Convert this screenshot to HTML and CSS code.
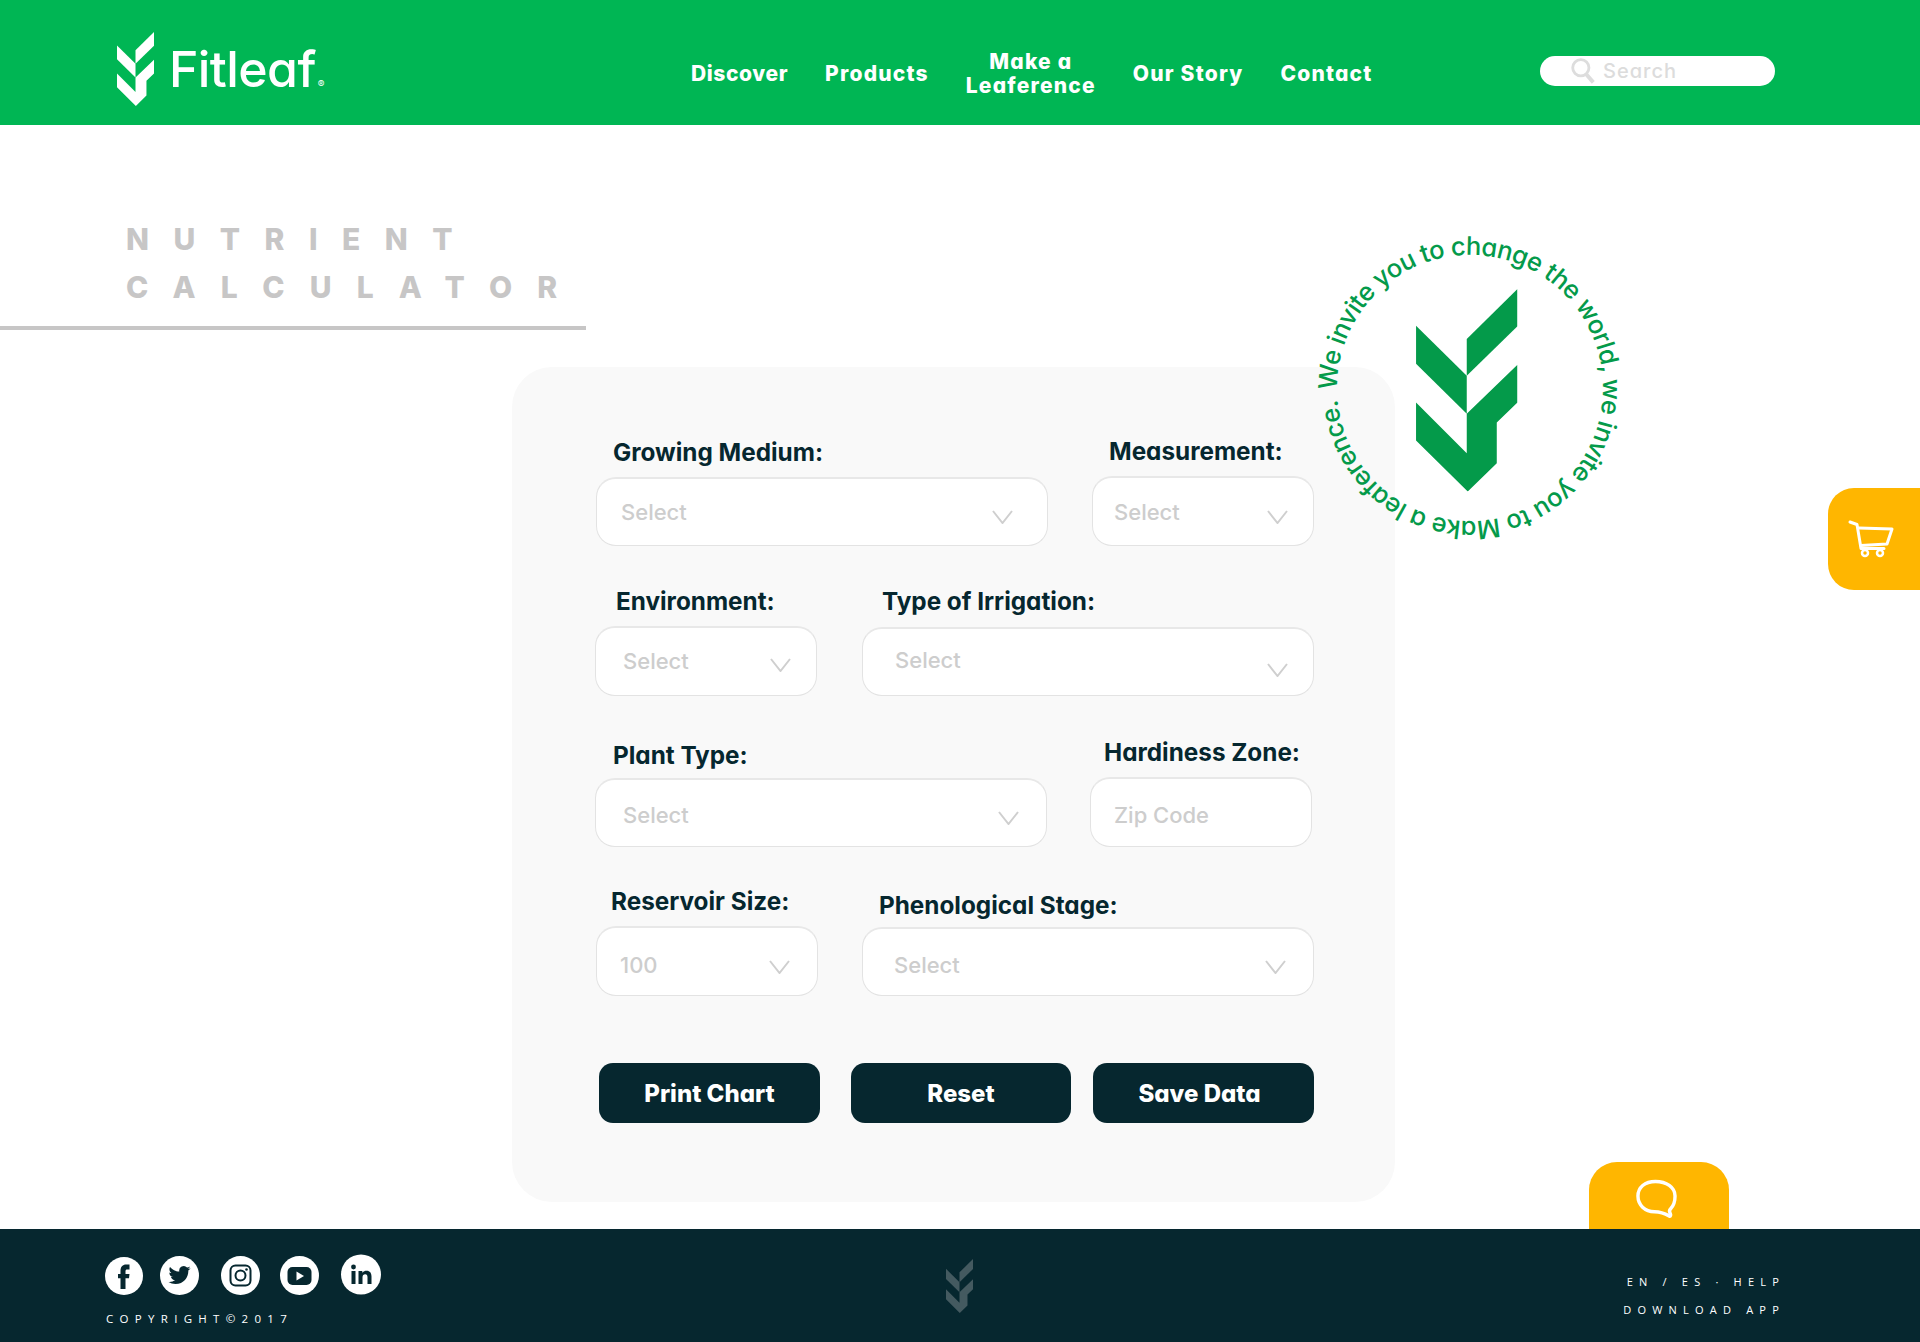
FILE: index.html
```html
<!DOCTYPE html>
<html lang="en">
<head>
<meta charset="utf-8">
<title>Fitleaf Nutrient Calculator</title>
<link rel="stylesheet" href="styles.css">
</head>
<body>
<svg class="defs" width="0" height="0" aria-hidden="true">
  <symbol id="leaf" viewBox="348 208 304 607">
    <path d="M500 358 652 208V320L500 468Z"/>
    <path d="M348 318 500 468V582L348 432Z"/>
    <path d="M348 548 500 700V582L652 435V548L590 608V730L503 815 348 662Z"/>
  </symbol>
  <symbol id="chev" viewBox="0 0 21 14">
    <path d="M1 1 10.5 13 20 1" fill="none" stroke="#cfcfcf" stroke-width="2"/>
  </symbol>
</svg>
<div class="page">
  <header class="header">
    <a class="brand">
      <svg class="brand-mark"><use href="#leaf"/></svg>
      <span class="brand-name">Fitleaf</span><span class="brand-reg">®</span>
    </a>
    <nav class="nav">
      <a>Discover</a>
      <a>Products</a>
      <a class="nav-two">Make a<br>Leaference</a>
      <a>Our Story</a>
      <a>Contact</a>
    </nav>
    <div class="search">
      <svg class="search-icon" viewBox="0 0 22 24"><circle cx="9" cy="9" r="7.5" fill="none" stroke="#dddddd" stroke-width="2.6"/><path d="M14 15 20.5 22.5" stroke="#dddddd" stroke-width="3.6" fill="none"/></svg>
      <span>Search</span>
    </div>
  </header>

  <main class="main">
    <h1 class="title"><span class="title-first">NUTRIENT</span><span>CALCULATOR</span></h1>
    <div class="title-rule"></div>

    <section class="panel">
      <div class="row row-a">
        <div class="field wide f-growing"><label>Growing Medium:</label><div class="select"><span>Select</span><svg class="chev"><use href="#chev"/></svg></div></div>
        <div class="field narrow f-measure"><label>Measurement:</label><div class="select tall"><span>Select</span><svg class="chev"><use href="#chev"/></svg></div></div>
      </div>
      <div class="row row-b">
        <div class="field narrow f-env"><label>Environment:</label><div class="select tall"><span>Select</span><svg class="chev"><use href="#chev"/></svg></div></div>
        <div class="field wide f-irr"><label>Type of Irrigation:</label><div class="select"><span>Select</span><svg class="chev"><use href="#chev"/></svg></div></div>
      </div>
      <div class="row row-c">
        <div class="field wide f-plant"><label>Plant Type:</label><div class="select"><span>Select</span><svg class="chev"><use href="#chev"/></svg></div></div>
        <div class="field narrow f-zone"><label>Hardiness Zone:</label><div class="select tall"><span>Zip Code</span></div></div>
      </div>
      <div class="row row-d">
        <div class="field narrow f-res"><label>Reservoir Size:</label><div class="select tall"><span>100</span><svg class="chev"><use href="#chev"/></svg></div></div>
        <div class="field wide f-pheno"><label>Phenological Stage:</label><div class="select"><span>Select</span><svg class="chev"><use href="#chev"/></svg></div></div>
      </div>
      <div class="actions">
        <button class="btn btn-print">Print Chart</button>
        <button class="btn btn-reset">Reset</button>
        <button class="btn btn-save">Save Data</button>
      </div>
    </section>

    <svg class="badge" viewBox="0 0 340 340">
      <defs><path id="ring" d="M39 172A133 133 0 1 1 305 168A133 133 0 0 1 39 172"/></defs>
      <text class="badge-text"><textPath href="#ring" textLength="826" lengthAdjust="spacing">We invite you to change the world, we invite you to Make a leaference.</textPath></text>
      <use href="#leaf" class="badge-leaf" x="118" y="71" width="101.5" height="202.5"/>
    </svg>

    <a class="cart-tab">
      <svg viewBox="0 0 46 38" width="46" height="38"><g fill="none" stroke="#fff" stroke-linecap="round" stroke-linejoin="round"><path d="M2 2 9 4.500 13 28.500H36" stroke-width="3"/><path d="M11 8 44 9 39 24 13 25.500" stroke-width="3"/></g><circle cx="17" cy="33" r="3" fill="none" stroke="#fff" stroke-width="2.500"/><circle cx="32" cy="33" r="3" fill="none" stroke="#fff" stroke-width="2.500"/></svg>
    </a>
    <a class="chat-tab">
      <svg viewBox="0 0 42 40" width="41" height="40"><path d="M20 2C9 2 2 8 2 17 2 26 9 33 19 33 24 33 29 34.500 34 37.500 35.500 38 36 36.500 35 34.500 34 33 34 31.500 35.500 30 38.500 27 40 22 40 17 40 8 31 2 20 2Z" fill="none" stroke="#fff" stroke-width="3.500" stroke-linejoin="round"/></svg>
    </a>
  </main>

  <footer class="footer">
    <div class="foot-left">
      <div class="socials">
        <svg class="soc soc-fb" viewBox="0 0 38 38"><circle cx="19" cy="19" r="19" fill="#fff"/><path d="M24.500 12.500H22c-1 0-1.500.5-1.500 1.600V17H24.500L24 21.300H20.500V32H15.500V21.300H13V17H15.500V13.800C15.500 9.800 17.500 7.500 21.300 7.500H24.500Z" fill="#06272f"/></svg>
        <svg class="soc soc-tw" viewBox="0 0 39 39"><circle cx="19.500" cy="19.500" r="19.500" fill="#fff"/><g transform="translate(8.500 8) scale(.92)"><path d="M23.953 4.570a10 10 0 01-2.825.775 4.958 4.958 0 002.163-2.723c-.951.555-2.005.959-3.127 1.184a4.920 4.920 0 00-8.384 4.482C7.690 8.095 4.067 6.130 1.640 3.162a4.822 4.822 0 00-.666 2.475c0 1.710.870 3.213 2.188 4.096a4.904 4.904 0 01-2.228-.616v.060a4.923 4.923 0 003.946 4.827 4.996 4.996 0 01-2.212.085 4.936 4.936 0 004.604 3.417 9.867 9.867 0 01-6.102 2.105c-.390 0-.779-.023-1.170-.067a13.995 13.995 0 007.557 2.209c9.053 0 13.998-7.496 13.998-13.985 0-.210 0-.420-.015-.630A9.935 9.935 0 0024 4.590z" fill="#06272f"/></g></svg>
        <svg class="soc soc-ig" viewBox="0 0 39 39"><circle cx="19.500" cy="19.500" r="19.500" fill="#fff"/><rect x="9.500" y="9.500" width="20" height="20" rx="5" fill="none" stroke="#06272f" stroke-width="2"/><circle cx="19.500" cy="19.500" r="5" fill="none" stroke="#06272f" stroke-width="2"/><circle cx="25.500" cy="13.500" r="1.300" fill="#06272f"/></svg>
        <svg class="soc soc-yt" viewBox="0 0 39 39"><circle cx="19.500" cy="19.500" r="19.500" fill="#fff"/><rect x="7.500" y="11" width="24" height="18" rx="5" fill="#06272f"/><path d="M16.500 15.500 24 20 16.500 24.500Z" fill="#fff"/></svg>
        <svg class="soc soc-in" viewBox="0 0 40 40"><circle cx="20" cy="20" r="20" fill="#fff"/><circle cx="12.500" cy="12.500" r="2.400" fill="#06272f"/><rect x="10.500" y="16.500" width="4" height="13" fill="#06272f"/><path d="M17.500 16.500H21.300V18.300C22.200 17 23.700 16.200 25.500 16.200 29 16.200 30.500 18.400 30.500 22V29.500H26.500V22.800C26.500 20.900 25.800 19.800 24.200 19.800 22.500 19.800 21.500 21 21.500 23V29.500H17.500Z" fill="#06272f"/></svg>
      </div>
      <p class="copyright">COPYRIGHT©2017</p>
    </div>
    <svg class="foot-leaf"><use href="#leaf"/></svg>
    <div class="foot-right">
      <p>EN / ES · HELP</p>
      <p>DOWNLOAD APP</p>
    </div>
  </footer>
</div>
</body>
</html>
```

FILE: styles.css
```css
* { box-sizing: border-box; }
html, body { margin: 0; padding: 0; background: #fff; }
body { font-family: Inter, "Open Sans", sans-serif; font-feature-settings: "cv11" 1; color: #06272f; }
.defs { position: absolute; }
.page { width: 1920px; height: 1342px; display: flex; flex-direction: column; overflow: hidden; }

/* header */
.header { height: 125px; flex: none; background: #00b654; color: #fff; display: flex; align-items: flex-start; position: relative; }
.brand { display: flex; align-items: flex-start; margin-left: 117px; padding-top: 32px; width: 569px; flex: none; }
.brand-mark { width: 37px; height: 74px; fill: #fff; flex: none; }
.brand-name { font-size: 50px; font-weight: 500; line-height: 56px; margin: 9px 0 0 15px; letter-spacing: -.6px; }
.brand-reg { font-size: 10px; margin: 47px 0 0 2px; line-height: 10px; }
.nav { display: flex; gap: 37px; align-items: center; margin-left: 5px; width: 850px; height: 48px; margin-top: 50px; flex: none; font-size: 21px; font-weight: 800; letter-spacing: 1.200px; line-height: 24px; }
.nav a:first-child { letter-spacing: .6px; }
.nav-two { text-align: center; }
.search { position: absolute; left: 1540px; top: 56px; width: 235px; height: 30px; background: #fff; border-radius: 15px; display: flex; align-items: center; padding-left: 31px; color: #dcdcdc; font-size: 20px; font-weight: 500; letter-spacing: 1px; }
.search-icon { width: 24px; height: 26px; margin-right: 8px; flex: none; }

/* main */
.main { flex: 1; position: relative; }
.title { margin: 0; padding: 90px 0 0 126px; font-size: 30px; font-weight: 800; color: #c7c6c6; letter-spacing: 25.200px; line-height: 48px; display: flex; flex-direction: column; }
.title-first { letter-spacing: 24.500px; }
.title-rule { width: 586px; height: 4px; background: #c7c6c6; margin-top: 15px; }
.panel { margin: 37px 0 0 512px; width: 883px; height: 835px; background: #f9f9f9; border-radius: 40px; padding: 69px 81px 0 83px; }

.row { display: flex; justify-content: space-between; align-items: flex-end; }
.row-a { margin-left: 1px; }
.row-b { margin-top: 40px; }
.row-c { margin-top: 41px; margin-right: 2px; }
.row-d { margin: 39px 0 0 1px; }
.field { display: flex; flex-direction: column; }
.wide { width: 452px; }
.narrow { width: 222px; }
.field label { display: block; font-size: 24.300px; font-weight: 700; line-height: 30px; margin-bottom: var(--lb, 10px); padding-left: var(--lx); white-space: nowrap; }
.select { height: 69px; background: #fff; border: 1px solid #e3e3e3; border-top: 2px solid #e8e8e8; border-radius: 20px; display: flex; align-items: center; justify-content: space-between; padding: 0 var(--cx) 0 var(--tx); font-size: 22px; font-weight: 500; color: #cdcdcd; }
.select.tall { height: 70px; }
.select span { transform: translateY(var(--ty, 0)); }
.chev { width: 21px; height: 14px; margin-top: var(--cy, 10px); flex: none; }

.f-growing { --lx: 17px; --tx: 24px; --cx: 34px; }
.f-measure { --lx: 17px; --tx: 21px; --cx: 25px; }
.f-env { --lx: 21px; --tx: 27px; --cx: 25px; --ty: -1px; --cy: 7px; }
.f-irr { --lx: 20px; --tx: 32px; --cx: 25px; --cy: 16px; --ty: -2px; --lb: 11px; }
.f-plant { --lx: 18px; --tx: 27px; --cx: 27px; --ty: 2px; --lb: 8px; }
.f-zone { --lx: 14px; --tx: 23px; --cx: 0; --ty: 2px; }
.f-res { --lx: 15px; --tx: 23px; --cx: 27px; --ty: 3px; }
.f-pheno { --lx: 17px; --tx: 31px; --cx: 27px; --ty: 3px; --lb: 7px; }

.actions { display: flex; margin: 67px 0 0 4px; }
.btn { height: 60px; width: 221px; border: 0; border-radius: 14px; background: #06272f; color: #fff; font: inherit; font-feature-settings: inherit; font-size: 24px; font-weight: 800; padding: 0; }
.btn-reset { width: 220px; margin-left: 31px; }
.btn-save { margin-left: 22px; padding-right: 8px; }

/* overlays */
.badge { position: absolute; left: 1298px; top: 93px; width: 340px; height: 340px; overflow: visible; }
.badge-text { font-size: 25.500px; font-weight: 500; fill: #049a4a; }
.badge-leaf { fill: #049a4a; }
.cart-tab { position: absolute; left: 1828px; top: 363px; width: 92px; height: 102px; background: #ffb600; border-radius: 26px 0 0 26px; display: flex; align-items: center; padding-left: 20px; }
.chat-tab { position: absolute; left: 1589px; bottom: 0; width: 140px; height: 67px; background: #ffb600; border-radius: 28px 28px 0 0; display: flex; justify-content: center; padding: 17px 5px 0 0; }

/* footer */
.footer { height: 113px; flex: none; background: #06272f; color: #fff; position: relative; display: flex; justify-content: space-between; padding: 25px 139px 0 105px; }
.socials { display: flex; align-items: flex-end; height: 41px; }
.soc { display: block; flex: none; }
.soc-fb { width: 38px; height: 38px; }
.soc-tw { width: 39px; height: 39px; margin-left: 17px; }
.soc-ig { width: 39px; height: 39px; margin-left: 22px; }
.soc-yt { width: 39px; height: 39px; margin-left: 20px; }
.soc-in { width: 40px; height: 41px; margin-left: 22px; }
.copyright { margin: 17px 0 0 1px; font-size: 11.500px; line-height: 14px; letter-spacing: 6.300px; font-family: "Open Sans", sans-serif; white-space: nowrap; }
.foot-leaf { position: absolute; left: 946px; top: 30px; width: 27px; height: 54px; fill: #445a60; }
.foot-right { text-align: right; font-size: 11px; line-height: 14px; letter-spacing: 6.200px; font-family: "Open Sans", sans-serif; padding-top: 21px; margin-right: -4px; }
.foot-right p { margin: 0 0 14px; }
```
